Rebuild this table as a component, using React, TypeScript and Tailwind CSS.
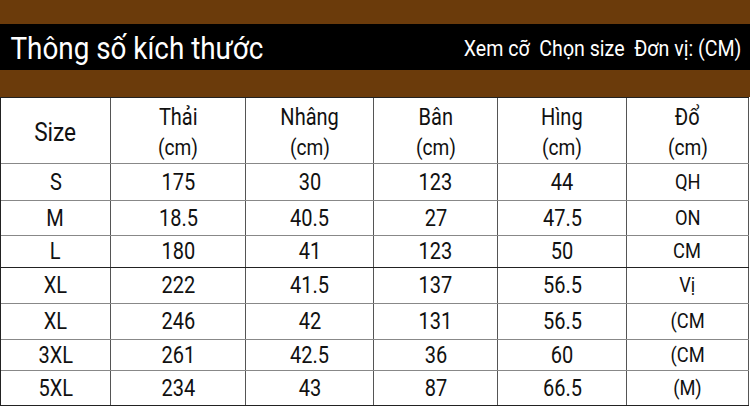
import React from "react";

const rows: { cells: string[]; h: string; dark?: boolean }[] = [
  { cells: ["S", "175", "30", "123", "44", "QH"], h: "h-[37px]" },
  { cells: ["M", "18.5", "40.5", "27", "47.5", "ON"], h: "h-[35px]" },
  { cells: ["L", "180", "41", "123", "50", "CM"], h: "h-[32px]", dark: true },
  { cells: ["XL", "222", "41.5", "137", "56.5", "Vị"], h: "h-[36px]" },
  { cells: ["XL", "246", "42", "131", "56.5", "(CM"], h: "h-[36px]" },
  { cells: ["3XL", "261", "42.5", "36", "60", "(CM"], h: "h-[31px]" },
  { cells: ["5XL", "234", "43", "87", "66.5", "(M)"], h: "h-[35px]" },
];

const widths = ["w-[110px]", "w-[135px]", "w-[128px]", "w-[124px]", "w-[129px]", "w-[122px]"];

const headers = ["Thải", "Nhâng", "Bân", "Hìng", "Đổ"];

function N({ children, className = "" }: { children: React.ReactNode; className?: string }) {
  return <span className={`inline-block scale-x-[0.87] whitespace-pre ${className}`}>{children}</span>;
}

export default function App() {
  return (
    <div
      className="w-[750px] h-[409px] bg-white overflow-hidden"
      style={{ fontFamily: '"Roboto", "Liberation Sans", sans-serif' }}
    >
      <div className="h-[24px] bg-[#6b3b0b]" />
      <div className="h-[46px] bg-black flex items-center justify-between text-white">
        <N className="text-[32px] leading-none origin-left pl-[12px] pt-[1px]">Thông số kích thước</N>
        <N className="text-[22.5px] leading-none origin-right pr-[10px] pt-[2px]">Xem cỡ  Chọn size  Đơn vị: (CM)</N>
      </div>
      <div className="h-[27px] bg-[#6b3b0b]" />
      <div className="flex flex-col border-t border-l border-[#222] w-[749px] text-[#111]">
        <div className="flex h-[66px] border-b border-[#888]">
          <div className={`${widths[0]} border-r border-[#555] flex items-center justify-center text-[26px] pt-[3px]`}>
            <N>Size</N>
          </div>
          {headers.map((h, i) => (
            <div
              key={i}
              className={`${widths[i + 1]} border-r border-[#555] flex flex-col items-center justify-center text-[23px] leading-[30px] pt-[5px]`}
            >
              <N>{h}</N>
              <N className="text-[22px]">(cm)</N>
            </div>
          ))}
        </div>
        {rows.map((r, ri) => (
          <div
            key={ri}
            className={`flex ${r.h} border-b ${r.dark || ri === rows.length - 1 ? "border-[#222]" : "border-[#888]"}`}
          >
            {r.cells.map((c, ci) => (
              <div
                key={ci}
                className={`${widths[ci]} border-r border-[#555] flex items-center justify-center ${
                  ci === 5 ? "text-[21px]" : "text-[23px]"
                } leading-none`}
              >
                <N>{c}</N>
              </div>
            ))}
          </div>
        ))}
      </div>
    </div>
  );
}
